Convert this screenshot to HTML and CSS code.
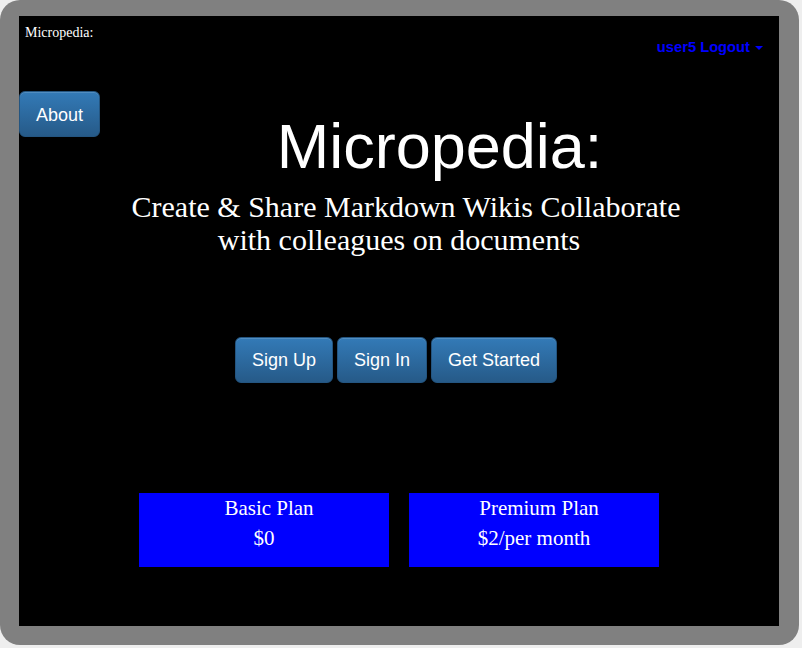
FILE: index.html
```html
<!DOCTYPE html>
<html>
<head>
<meta charset="utf-8">
<title>Micropedia</title>
<link rel="stylesheet" href="styles.css">
</head>
<body>
<div class="frame">
  <div class="screen">
    <div class="topbar">
      <div class="brand">Micropedia:</div>
      <div class="user"><a href="#">user5</a> <a href="#">Logout</a> <span class="caret"></span></div>
    </div>
    <div class="hero">
      <a class="btn btn-lg about" href="#">About</a>
      <h1 class="title">Micropedia:</h1>
    </div>
    <p class="subtitle"><span class="line1">Create &amp; Share Markdown Wikis Collaborate</span><span class="line2">with colleagues on documents</span></p>
    <div class="actions">
      <a class="btn btn-lg" href="#">Sign Up</a>
      <a class="btn btn-lg" href="#">Sign In</a>
      <a class="btn btn-lg" href="#">Get Started</a>
    </div>
    <div class="plans">
      <div class="plan">
        <div class="plan-name">Basic Plan</div>
        <div class="plan-price">$0</div>
      </div>
      <div class="plan">
        <div class="plan-name">Premium Plan</div>
        <div class="plan-price">$2/per month</div>
      </div>
    </div>
  </div>
</div>
</body>
</html>
```
FILE: styles.css
```css
html, body {
  margin: 0;
  padding: 0;
  background: #eeeeee;
}
.frame {
  box-sizing: border-box;
  width: 799px;
  height: 645px;
  background: #808080;
  border-radius: 20px;
  padding: 16px 20px 19px 19px;
}
.screen {
  background: #000;
  height: 610px;
  width: 760px;
}
.topbar {
  display: flex;
  justify-content: space-between;
  align-items: flex-start;
  height: 75px;
}
.brand {
  font-family: "Liberation Serif", serif;
  font-size: 14px;
  color: #fff;
  padding: 9px 0 0 6px;
}
.user {
  font-family: "Liberation Sans", Arial, sans-serif;
  font-weight: bold;
  font-size: 14.7px;
  color: #0000ff;
  margin-top: 23px;
  padding-right: 16px;
}
.user a {
  color: #0000ff;
  text-decoration: none;
}
.caret {
  display: inline-block;
  width: 0;
  height: 0;
  margin-left: 1px;
  vertical-align: middle;
  border-top: 4px solid #0000ff;
  border-left: 4px solid transparent;
  border-right: 4px solid transparent;
}
.btn {
  display: inline-block;
  box-sizing: border-box;
  font-family: "Liberation Sans", Arial, sans-serif;
  color: #fff;
  text-decoration: none;
  text-align: center;
  background-image: linear-gradient(to bottom, #337ab7 0, #265a88 100%);
  border: 1px solid #245580;
  box-shadow: inset 0 1px 0 rgba(255,255,255,.15), 0 1px 1px rgba(0,0,0,.075);
}
.btn-lg {
  padding: 10px 16px;
  font-size: 18px;
  line-height: 24px;
  border-radius: 6px;
}
.hero {
  display: flex;
  align-items: flex-start;
}
.about {
  flex: none;
  padding-top: 11px;
  padding-bottom: 9px;
}
.title {
  flex: 1;
  margin: 20px 0 0 0;
  text-align: center;
  font-family: "Liberation Sans", Arial, sans-serif;
  font-weight: normal;
  font-size: 63px;
  line-height: 70px;
  color: #fff;
}
.subtitle {
  margin: 9px 0 0 0;
  text-align: center;
  font-family: "Liberation Serif", serif;
  font-size: 30px;
  line-height: 33px;
  color: #fff;
}
.subtitle span {
  display: block;
}
.line1 {
  padding-left: 14px;
}
.actions {
  display: flex;
  justify-content: center;
  gap: 4px;
  margin-top: 81px;
  padding-right: 6px;
}
.plans {
  display: flex;
  justify-content: center;
  gap: 20px;
  margin-top: 110px;
}
.plan {
  box-sizing: border-box;
  width: 250px;
  height: 74px;
  background: #0000ff;
  color: #fff;
  font-family: "Liberation Serif", serif;
  font-size: 21px;
  line-height: 30px;
  text-align: center;
  padding-top: 0;
}
.plan-name {
  padding-left: 10px;
}
```
